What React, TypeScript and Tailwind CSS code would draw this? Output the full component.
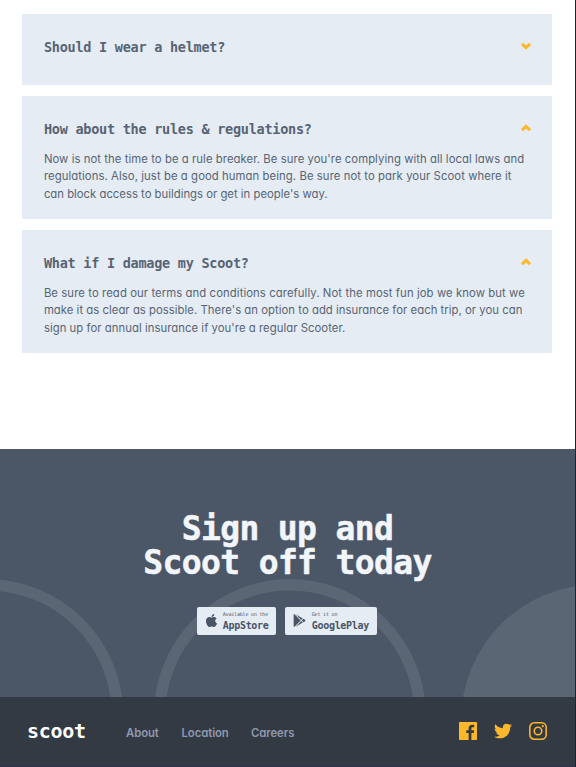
import { FaApple, FaGooglePlay } from "react-icons/fa";

type Line = { text: string; tracking: string };
type Faq = { question: string; open: boolean; box: string; lines: Line[] };

const mono = "font-['DejaVu_Sans_Mono','Liberation_Mono',monospace]";
const body = "font-['Inter','Open_Sans',sans-serif] [font-feature-settings:'cv11']";

const faqs: Faq[] = [
  { question: "Should I wear a helmet?", open: false, box: "h-[70.5px]", lines: [] },
  {
    question: "How about the rules & regulations?",
    open: true,
    box: "h-[122.7px]",
    lines: [
      { text: "Now is not the time to be a rule breaker. Be sure you're complying with all local laws and", tracking: "tracking-[0.067px]" },
      { text: "regulations. Also, just be a good human being. Be sure not to park your Scoot where it", tracking: "tracking-[0.08px]" },
      { text: "can block access to buildings or get in people's way.", tracking: "tracking-[0.01px]" },
    ],
  },
  {
    question: "What if I damage my Scoot?",
    open: true,
    box: "h-[122.7px]",
    lines: [
      { text: "Be sure to read our terms and conditions carefully. Not the most fun job we know but we", tracking: "tracking-[0.09px]" },
      { text: "make it as clear as possible. There's an option to add insurance for each trip, or you can", tracking: "tracking-[0.04px]" },
      { text: "sign up for annual insurance if you're a regular Scooter.", tracking: "tracking-[0.05px]" },
    ],
  },
];

function Chevron({ open }: { open: boolean }) {
  return (
    <svg viewBox="0 0 10 8" className={`mt-[5px] h-2 w-[10px] shrink-0 ${open ? "rotate-180" : ""}`} fill="none" stroke="#fcb72b" strokeWidth="3">
      <path d="M1 1.8 5 5.6 9 1.8" />
    </svg>
  );
}

function FaqCard({ faq }: { faq: Faq }) {
  return (
    <section className={`${faq.box} bg-[#e5ecf4] pt-[23px] pr-[21.5px] pl-[22.3px] text-[#495567]`}>
      <div className="flex justify-between">
        <h3 className={`${mono} text-[13.5px] leading-[21px] font-bold tracking-[-0.25px] opacity-90`}>{faq.question}</h3>
        <Chevron open={faq.open} />
      </div>
      {faq.open && (
        <div className={`${body} mt-[10.4px] text-[11.3px] leading-[17.5px] whitespace-nowrap opacity-90`}>
          {faq.lines.map((line) => (
            <p key={line.text} className={line.tracking}>{line.text}</p>
          ))}
        </div>
      )}
    </section>
  );
}

function Circles() {
  return (
    <svg className="absolute inset-0" width="575" height="248" viewBox="0 0 575 248" fill="none" stroke="#5b6675" strokeWidth="11.4">
      <circle cx="-12.7" cy="266" r="130.2" />
      <circle cx="289.8" cy="266" r="130.2" />
      <circle cx="597" cy="271.5" r="136" fill="#5b6675" stroke="none" />
    </svg>
  );
}

function SocialIcons() {
  return (
    <div className="flex gap-[17px] text-[#fcb72b]">
      <svg viewBox="0 0 24 24" className="size-[18px]" fill="currentColor">
        <path d="M22.675 0H1.325C.593 0 0 .593 0 1.325v21.351C0 23.407.593 24 1.325 24H12.82v-9.294H9.692v-3.622h3.128V8.413c0-3.1 1.893-4.788 4.659-4.788 1.325 0 2.463.099 2.795.143v3.24l-1.918.001c-1.504 0-1.795.715-1.795 1.763v2.313h3.587l-.467 3.622h-3.12V24h6.116c.73 0 1.323-.593 1.323-1.325V1.325C24 .593 23.407 0 22.675 0z" />
      </svg>
      <svg viewBox="0 0 24 24" className="size-[18px]" fill="currentColor">
        <path d="M24 4.557c-.883.392-1.832.656-2.828.775 1.017-.609 1.798-1.574 2.165-2.724-.951.564-2.005.974-3.127 1.195-.897-.957-2.178-1.555-3.594-1.555-3.179 0-5.515 2.966-4.797 6.045-4.091-.205-7.719-2.165-10.148-5.144-1.29 2.213-.669 5.108 1.523 6.574-.806-.026-1.566-.247-2.229-.616-.054 2.281 1.581 4.415 3.949 4.89-.693.188-1.452.232-2.224.084.626 1.956 2.444 3.379 4.6 3.419-2.07 1.623-4.678 2.348-7.29 2.04 2.179 1.397 4.768 2.212 7.548 2.212 9.142 0 14.307-7.721 13.995-14.646.962-.695 1.797-1.562 2.457-2.549z" />
      </svg>
      <svg viewBox="0 0 24 24" className="size-[18px]" fill="none" stroke="currentColor" strokeWidth="2.1">
        <rect x="1.1" y="1.1" width="21.8" height="21.8" rx="6" />
        <circle cx="12" cy="12" r="5" />
        <circle cx="18.4" cy="5.6" r="1.45" fill="currentColor" stroke="none" />
      </svg>
    </div>
  );
}

export default function App() {
  return (
    <div className="flex h-[767px] w-[576px] flex-col overflow-hidden border-r border-[#20232a] bg-white">
      <main className="flex h-[449.4px] shrink-0 flex-col gap-[11.5px] pt-[14.3px] pr-[23px] pl-[21.6px]">
        {faqs.map((faq) => (
          <FaqCard key={faq.question} faq={faq} />
        ))}
      </main>

      <section className="relative h-[247.4px] shrink-0 overflow-hidden bg-[#4b5667]">
        <Circles />
        <div className="relative flex flex-col items-center pt-[62.3px]">
          <h2 className={`${mono} text-center text-[33px] leading-[34px] font-bold tracking-[-0.65px] text-[#f2f5f9] [-webkit-text-stroke:0.5px_#f2f5f9]`}>
            Sign up and
            <br />
            Scoot off today
          </h2>
          <div className={`${mono} mt-[27px] mr-[1.5px] flex gap-[9px] text-[#495567]`}>
            <a className="flex h-7 w-[79.5px] items-center rounded-[2px] bg-[#e5ecf4] pl-[7px]">
              <FaApple className="size-[15px]" />
              <span className="mt-[2px] ml-[4px] flex flex-col whitespace-nowrap">
                <span className="text-[5px] leading-[6px] tracking-[-0.18px]">Available on the</span>
                <span className="mt-[2px] text-[10px] leading-[13px] font-bold tracking-[-0.3px]">AppStore</span>
              </span>
            </a>
            <a className="flex h-7 w-[91.5px] items-center rounded-[2px] bg-[#e5ecf4] pl-[7.5px]">
              <FaGooglePlay className="size-[13px]" />
              <span className="mt-[2px] ml-[6px] flex flex-col whitespace-nowrap">
                <span className="text-[5px] leading-[6px] tracking-[-0.18px]">Get it on</span>
                <span className="mt-[2px] text-[10px] leading-[13px] font-bold tracking-[-0.3px]">GooglePlay</span>
              </span>
            </a>
          </div>
        </div>
      </section>

      <footer className="flex grow items-center border-b border-[#30334a] bg-[#333a44] pr-[27.6px] pl-[27px]">
        <span className={`${mono} w-[99px] text-[20px] leading-6 font-bold tracking-[-0.3px] text-white`}>scoot</span>
        <nav className={`${body} mt-[3px] flex grow text-[11.3px] leading-4 font-semibold tracking-[-0.05px] text-[#8f99ae]`}>
          <a className="w-[55.5px]">About</a>
          <a className="w-[69.5px]">Location</a>
          <a>Careers</a>
        </nav>
        <SocialIcons />
      </footer>
    </div>
  );
}
